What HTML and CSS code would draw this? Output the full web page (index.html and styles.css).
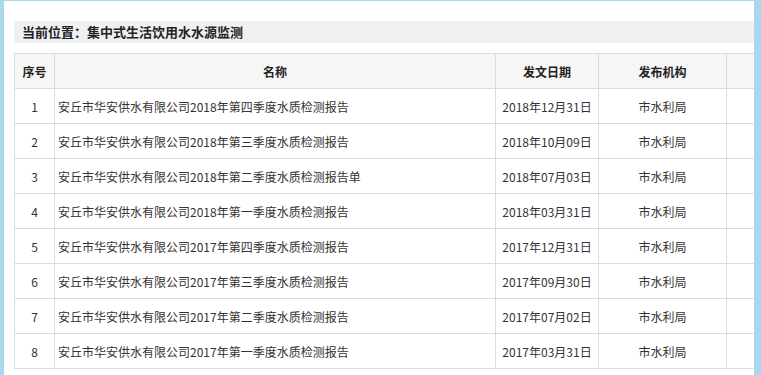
FILE: index.html
```html
<!DOCTYPE html>
<html lang="zh-CN">
<head>
<meta charset="utf-8">
<title>集中式生活饮用水水源监测</title>
<link rel="stylesheet" href="styles.css">
</head>
<body>
<div class="panel">
  <div class="crumb">当前位置：集中式生活饮用水水源监测</div>
  <table class="list">
    <colgroup>
      <col class="c-no"><col class="c-name"><col class="c-date"><col class="c-org"><col class="c-pad">
    </colgroup>
    <thead>
      <tr><th>序号</th><th>名称</th><th>发文日期</th><th>发布机构</th><th class="pad"></th></tr>
    </thead>
    <tbody>
      <tr><td class="no">1</td><td class="name">安丘市华安供水有限公司2018年第四季度水质检测报告</td><td class="ctr">2018年12月31日</td><td class="ctr">市水利局</td><td class="pad"></td></tr>
      <tr><td class="no">2</td><td class="name">安丘市华安供水有限公司2018年第三季度水质检测报告</td><td class="ctr">2018年10月09日</td><td class="ctr">市水利局</td><td class="pad"></td></tr>
      <tr><td class="no">3</td><td class="name">安丘市华安供水有限公司2018年第二季度水质检测报告单</td><td class="ctr">2018年07月03日</td><td class="ctr">市水利局</td><td class="pad"></td></tr>
      <tr><td class="no">4</td><td class="name">安丘市华安供水有限公司2018年第一季度水质检测报告</td><td class="ctr">2018年03月31日</td><td class="ctr">市水利局</td><td class="pad"></td></tr>
      <tr><td class="no">5</td><td class="name">安丘市华安供水有限公司2017年第四季度水质检测报告</td><td class="ctr">2017年12月31日</td><td class="ctr">市水利局</td><td class="pad"></td></tr>
      <tr><td class="no">6</td><td class="name">安丘市华安供水有限公司2017年第三季度水质检测报告</td><td class="ctr">2017年09月30日</td><td class="ctr">市水利局</td><td class="pad"></td></tr>
      <tr><td class="no">7</td><td class="name">安丘市华安供水有限公司2017年第二季度水质检测报告</td><td class="ctr">2017年07月02日</td><td class="ctr">市水利局</td><td class="pad"></td></tr>
      <tr><td class="no">8</td><td class="name">安丘市华安供水有限公司2017年第一季度水质检测报告</td><td class="ctr">2017年03月31日</td><td class="ctr">市水利局</td><td class="pad"></td></tr>
    </tbody>
  </table>
</div>
</body>
</html>
```

FILE: styles.css
```css
html, body {
  margin: 0;
  padding: 0;
  height: 100%;
}
body {
  background: #a7d8ee;
  font-family: "Noto Sans CJK SC", "Microsoft YaHei", sans-serif;
  color: #333;
  font-size: 12px;
  overflow: hidden;
}
.panel {
  margin-left: 4px;
  margin-top: 1px;
  width: 750px;
  height: 374px;
  background: #fff;
  padding: 20px 0 0 10px;
  box-sizing: border-box;
  overflow: hidden;
}
.crumb {
  height: 22px;
  line-height: 22px;
  background: #f0f0f0;
  padding-left: 8px;
  font-size: 13px;
  font-weight: bold;
  color: #222;
}
.list {
  margin-top: 10px;
  border-collapse: collapse;
  table-layout: fixed;
  width: 750px;
}
.c-no { width: 40px; }
.c-name { width: 441px; }
.c-date { width: 103px; }
.c-org { width: 128px; }
.c-pad { width: 38px; }
.list th, .list td {
  border: 1px solid #dcdcdc;
  height: 34px;
  padding: 0;
  white-space: nowrap;
  overflow: hidden;
}
.list th {
  background: #f6f6f6;
  font-weight: bold;
  font-size: 12px;
  color: #222;
  text-align: center;
}
.list td {
  background: #fff;
}
.list td.no, .list td.ctr {
  text-align: center;
}
.list td.name {
  padding-left: 3px;
  text-align: left;
}
```
